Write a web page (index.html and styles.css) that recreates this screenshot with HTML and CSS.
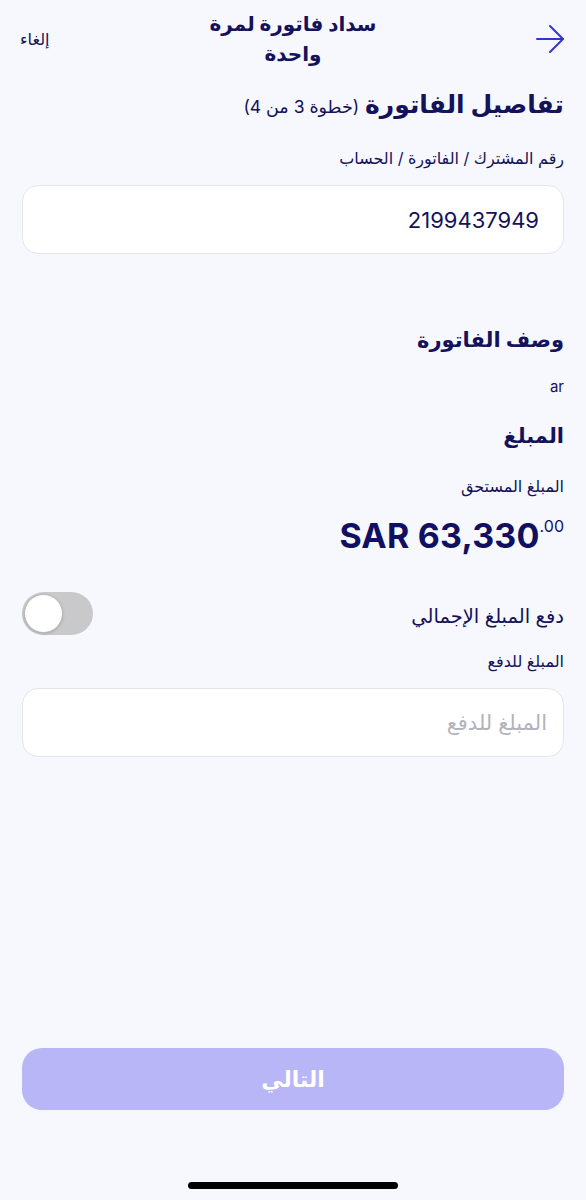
FILE: index.html
```html
<!DOCTYPE html>
<html lang="ar" dir="rtl">
<head>
<meta charset="utf-8">
<link rel="stylesheet" href="styles.css">
</head>
<body>
<div class="screen">
  <header class="topbar">
    <div class="back">
      <svg width="30" height="30" viewBox="0 0 30 30" fill="none" stroke="#3434d4" stroke-width="2" stroke-linecap="round" stroke-linejoin="round"><path d="M2 15 H28"/><path d="M15 2 L28 15 L15 28"/></svg>
    </div>
    <h1 class="title">سداد فاتورة لمرة<br>واحدة</h1>
    <div class="cancel">إلغاء</div>
  </header>

  <main class="content">
    <h2 class="step">تفاصيل الفاتورة <span class="step-count">(خطوة 3 من 4)</span></h2>
    <div class="label label-first">رقم المشترك / الفاتورة / الحساب</div>
    <div class="field"><span class="field-value">2199437949</span></div>

    <h3 class="section">وصف الفاتورة</h3>
    <div class="label label-ar">ar</div>

    <h3 class="section section-amount">المبلغ</h3>
    <div class="label label-due">المبلغ المستحق</div>
    <div class="amount" dir="ltr">SAR 63,330<sup class="cents">.00</sup></div>

    <div class="toggle-row">
      <span class="toggle-label">دفع المبلغ الإجمالي</span>
      <span class="toggle"><span class="knob"></span></span>
    </div>
    <div class="label label-pay">المبلغ للدفع</div>
    <div class="field"><span class="placeholder">المبلغ للدفع</span></div>
  </main>

  <footer class="footer">
    <button class="next">التالي</button>
    <div class="home-indicator"></div>
  </footer>
</div>
</body>
</html>
```

FILE: styles.css
```css
* { box-sizing: border-box; }
html, body { margin: 0; padding: 0; }
body {
  background: #f7f8fd;
  font-family: Inter, "DejaVu Sans", "Noto Sans", sans-serif;
  color: #14125a;
}
.screen {
  width: 586px;
  height: 1200px;
  display: flex;
  flex-direction: column;
}
.topbar {
  display: flex;
  align-items: center;
  justify-content: space-between;
  padding: 6px 20px 0 20px;
  height: 72px;
}
.back { width: 34px; display: flex; justify-content: flex-start; padding-right: 1px; }
.title {
  margin: 0;
  font-size: 20px;
  line-height: 30px;
  font-weight: 700;
  text-align: center;
  color: #14125a;
}
.cancel {
  width: 34px;
  font-size: 16px;
  color: #14125a;
  text-align: left;
}
.content {
  padding: 0 22px;
  display: flex;
  flex-direction: column;
}
.step {
  margin: 14px 0 0;
  font-size: 25px;
  line-height: 36px;
  font-weight: 700;
}
.step-count { font-size: 17.5px; font-weight: 400; }
.label {
  margin-top: 14px;
  font-size: 16px;
  line-height: 22px;
  color: #14125a;
}
.label-first { margin-top: 22px; }
.field {
  margin-top: 16px;
  height: 69px;
  background: #fff;
  border: 1px solid #e4e4ea;
  border-radius: 16px;
  display: flex;
  align-items: center;
  padding: 0 24px;
}
.field-value { font-size: 22px; color: #14125a; }
.placeholder { font-size: 21px; color: #b3b3bb; margin-right: -8px; }
.section {
  margin: 70px 0 0;
  font-size: 21px;
  line-height: 32px;
  font-weight: 700;
}
.label-ar { margin-top: 20px; font-size: 15px; }
.section-amount { margin-top: 22px; }
.label-due { margin-top: 23px; }
.amount {
  margin-top: 19px;
  text-align: right;
  font-size: 34px;
  line-height: 40px;
  font-weight: 700;
  letter-spacing: 0.2px;
  color: #110f62;
}
.cents {
  font-size: 16px;
  font-weight: 400;
  vertical-align: 16px;
  line-height: 0;
  letter-spacing: 0;
}
.toggle-row {
  margin-top: 36px;
  display: flex;
  align-items: center;
  justify-content: space-between;
}
.toggle-label { font-size: 19.5px; padding-top: 4px; }
.toggle {
  width: 71px;
  height: 43px;
  border-radius: 22px;
  background: #c9c9cb;
  position: relative;
  display: block;
}
.knob {
  position: absolute;
  left: 2px;
  top: 2px;
  width: 39px;
  height: 39px;
  border-radius: 50%;
  background: #fff;
  border: 1px solid #b8b8ba;
  box-shadow: 0 1px 3px rgba(0,0,0,0.15);
}
.label-pay { margin-top: 15px; }
.footer {
  margin-top: auto;
  padding: 0 22px;
  display: flex;
  flex-direction: column;
  align-items: center;
}
.next {
  width: 100%;
  height: 62px;
  border: none;
  border-radius: 20px;
  background: #b8b6f6;
  color: #fff;
  font-family: inherit;
  font-size: 22px;
  font-weight: 700;
}
.home-indicator {
  margin-top: 72px;
  margin-bottom: 11px;
  width: 210px;
  height: 7px;
  border-radius: 4px;
  background: #000;
}
```
